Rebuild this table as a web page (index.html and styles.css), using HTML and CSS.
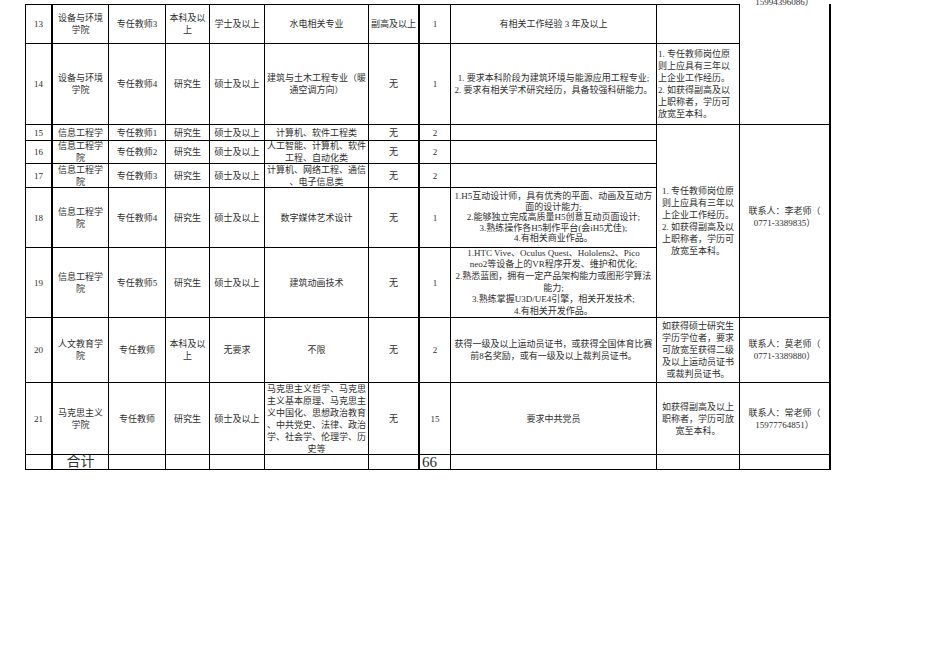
FILE: index.html
```html
<!DOCTYPE html>
<html lang="zh-CN">
<head>
<meta charset="utf-8">
<title>招聘岗位表</title>
<link rel="stylesheet" href="styles.css">
</head>
<body>
<div class="sheet">
  <!-- row 13 -->
  <div class="c c1 top"><div>13</div></div>
  <div class="c top"><div>设备与环境<br>学院</div></div>
  <div class="c top"><div>专任教师3</div></div>
  <div class="c top"><div>本科及以<br>上</div></div>
  <div class="c top"><div>学士及以上</div></div>
  <div class="c top"><div>水电相关专业</div></div>
  <div class="c c7 top"><div>副高及以上</div></div>
  <div class="c top"><div>1</div></div>
  <div class="c top"><div>有相关工作经验 3 年及以上</div></div>
  <div class="c top"></div>
  <div class="c c11 span2 clipped"><div class="above">15994396086）</div></div>

  <!-- row 14 -->
  <div class="c c1"><div>14</div></div>
  <div class="c"><div>设备与环境<br>学院</div></div>
  <div class="c"><div>专任教师4</div></div>
  <div class="c"><div>研究生</div></div>
  <div class="c"><div>硕士及以上</div></div>
  <div class="c"><div>建筑与土木工程专业（暖<br>通空调方向）</div></div>
  <div class="c c7"><div>无</div></div>
  <div class="c"><div>1</div></div>
  <div class="c"><div>1. 要求本科阶段为建筑环境与能源应用工程专业;<br>2. 要求有相关学术研究经历，具备较强科研能力。</div></div>
  <div class="c l"><div>1. 专任教师岗位原<br>则上应具有三年以<br>上企业工作经历。<br>2. 如获得副高及以<br>上职称者，学历可<br>放宽至本科。</div></div>

  <!-- row 15 -->
  <div class="c c1"><div>15</div></div>
  <div class="c"><div>信息工程学</div></div>
  <div class="c"><div>专任教师1</div></div>
  <div class="c"><div>研究生</div></div>
  <div class="c"><div>硕士及以上</div></div>
  <div class="c"><div>计算机、软件工程类</div></div>
  <div class="c c7"><div>无</div></div>
  <div class="c"><div>2</div></div>
  <div class="c"></div>
  <div class="c span5"><div>1. 专任教师岗位原<br>则上应具有三年以<br>上企业工作经历。<br>2. 如获得副高及以<br>上职称者，学历可<br>放宽至本科。</div></div>
  <div class="c c11 span5 lift"><div>联系人：李老师（<br>0771-3389835）</div></div>

  <!-- row 16 -->
  <div class="c c1"><div>16</div></div>
  <div class="c"><div>信息工程学<br>院</div></div>
  <div class="c"><div>专任教师2</div></div>
  <div class="c"><div>研究生</div></div>
  <div class="c"><div>硕士及以上</div></div>
  <div class="c"><div>人工智能、计算机、软件<br>工程、自动化类</div></div>
  <div class="c c7"><div>无</div></div>
  <div class="c"><div>2</div></div>
  <div class="c"></div>

  <!-- row 17 -->
  <div class="c c1"><div>17</div></div>
  <div class="c"><div>信息工程学<br>院</div></div>
  <div class="c"><div>专任教师3</div></div>
  <div class="c"><div>研究生</div></div>
  <div class="c"><div>硕士及以上</div></div>
  <div class="c"><div>计算机、网络工程、通信<br>、电子信息类</div></div>
  <div class="c c7"><div>无</div></div>
  <div class="c"><div>2</div></div>
  <div class="c"></div>

  <!-- row 18 -->
  <div class="c c1"><div>18</div></div>
  <div class="c"><div>信息工程学<br>院</div></div>
  <div class="c"><div>专任教师4</div></div>
  <div class="c"><div>研究生</div></div>
  <div class="c"><div>硕士及以上</div></div>
  <div class="c"><div>数字媒体艺术设计</div></div>
  <div class="c c7"><div>无</div></div>
  <div class="c"><div>1</div></div>
  <div class="c tight"><div>1.H5互动设计师，具有优秀的平面、动画及互动方<br>面的设计能力;<br>2.能够独立完成高质量H5创意互动页面设计;<br>3.熟练操作各H5制作平台(会iH5尤佳);<br>4.有相关商业作品。</div></div>

  <!-- row 19 -->
  <div class="c c1"><div>19</div></div>
  <div class="c"><div>信息工程学<br>院</div></div>
  <div class="c"><div>专任教师5</div></div>
  <div class="c"><div>研究生</div></div>
  <div class="c"><div>硕士及以上</div></div>
  <div class="c"><div>建筑动画技术</div></div>
  <div class="c c7"><div>无</div></div>
  <div class="c"><div>1</div></div>
  <div class="c mid"><div>1.HTC Vive、Oculus Quest、Hololens2、Pico<br>neo2等设备上的VR程序开发、维护和优化;<br>2.熟悉蓝图，拥有一定产品架构能力或图形学算法<br>能力;<br>3.熟练掌握U3D/UE4引擎，相关开发技术;<br>4.有相关开发作品。</div></div>

  <!-- row 20 -->
  <div class="c c1"><div>20</div></div>
  <div class="c"><div>人文教育学<br>院</div></div>
  <div class="c"><div>专任教师</div></div>
  <div class="c"><div>本科及以<br>上</div></div>
  <div class="c"><div>无要求</div></div>
  <div class="c"><div>不限</div></div>
  <div class="c c7"><div>无</div></div>
  <div class="c"><div>2</div></div>
  <div class="c"><div>获得一级及以上运动员证书，或获得全国体育比赛<br>前8名奖励，或有一级及以上裁判员证书。</div></div>
  <div class="c"><div>如获得硕士研究生<br>学历学位者，要求<br>可放宽至获得二级<br>及以上运动员证书<br>或裁判员证书。</div></div>
  <div class="c c11"><div>联系人：莫老师（<br>0771-3389880）</div></div>

  <!-- row 21 -->
  <div class="c c1"><div>21</div></div>
  <div class="c"><div>马克思主义<br>学院</div></div>
  <div class="c"><div>专任教师</div></div>
  <div class="c"><div>研究生</div></div>
  <div class="c"><div>硕士及以上</div></div>
  <div class="c"><div>马克思主义哲学、马克思<br>主义基本原理、马克思主<br>义中国化、思想政治教育<br>、中共党史、法律、政治<br>学、社会学、伦理学、历<br>史等</div></div>
  <div class="c c7"><div>无</div></div>
  <div class="c"><div>15</div></div>
  <div class="c"><div>要求中共党员</div></div>
  <div class="c"><div>如获得副高及以上<br>职称者，学历可放<br>宽至本科。</div></div>
  <div class="c c11"><div>联系人：常老师（<br>15977764851）</div></div>

  <!-- total -->
  <div class="c c1"></div>
  <div class="c total"><div>合计</div></div>
  <div class="c"></div>
  <div class="c"></div>
  <div class="c"></div>
  <div class="c"></div>
  <div class="c c7"></div>
  <div class="c sum"><div>66</div></div>
  <div class="c"></div>
  <div class="c"></div>
  <div class="c c11"></div>
</div>
</body>
</html>
```

FILE: styles.css
```css
html, body {
  margin: 0;
  padding: 0;
  background: #ffffff;
}

body {
  font-family: "Liberation Serif", "Noto Sans CJK SC", serif;
  font-size: 9px;
  color: #2e2e2e;
}

.sheet {
  display: grid;
  grid-template-columns: 27px 56px 57px 44px 55px 104px 51px 31px 206px 83px 91px;
  grid-template-rows: 40px 81px 16px 23px 24px 60px 70px 65px 72px 15px;
  width: 805px;
  margin: 4px 0 0 25px;
  border-left: 1px solid #000;
}

.c {
  box-sizing: border-box;
  border-right: 1px solid #000;
  border-bottom: 1px solid #000;
  display: flex;
  align-items: center;
  justify-content: center;
  text-align: center;
  white-space: nowrap;
  overflow: hidden;
  line-height: 12px;
}

.c1, .c7, .c11 {
  border-right-width: 2px;
}

.top {
  border-top: 1px solid #000;
}

.span2 {
  grid-row: span 2;
}

.span5 {
  grid-row: span 5;
}

.l {
  justify-content: flex-start;
  text-align: left;
  padding-left: 1px;
}

.clipped {
  align-items: flex-start;
  overflow: visible;
}

.above {
  margin-top: -8px;
}

.lift {
  padding-bottom: 8px;
}

.tight {
  line-height: 10.5px;
}

.mid {
  line-height: 11.6px;
}

.total {
  font-size: 14px;
  line-height: 14px;
}

.sum {
  justify-content: flex-start;
  padding-left: 2px;
  font-size: 15px;
  line-height: 14px;
}
```
